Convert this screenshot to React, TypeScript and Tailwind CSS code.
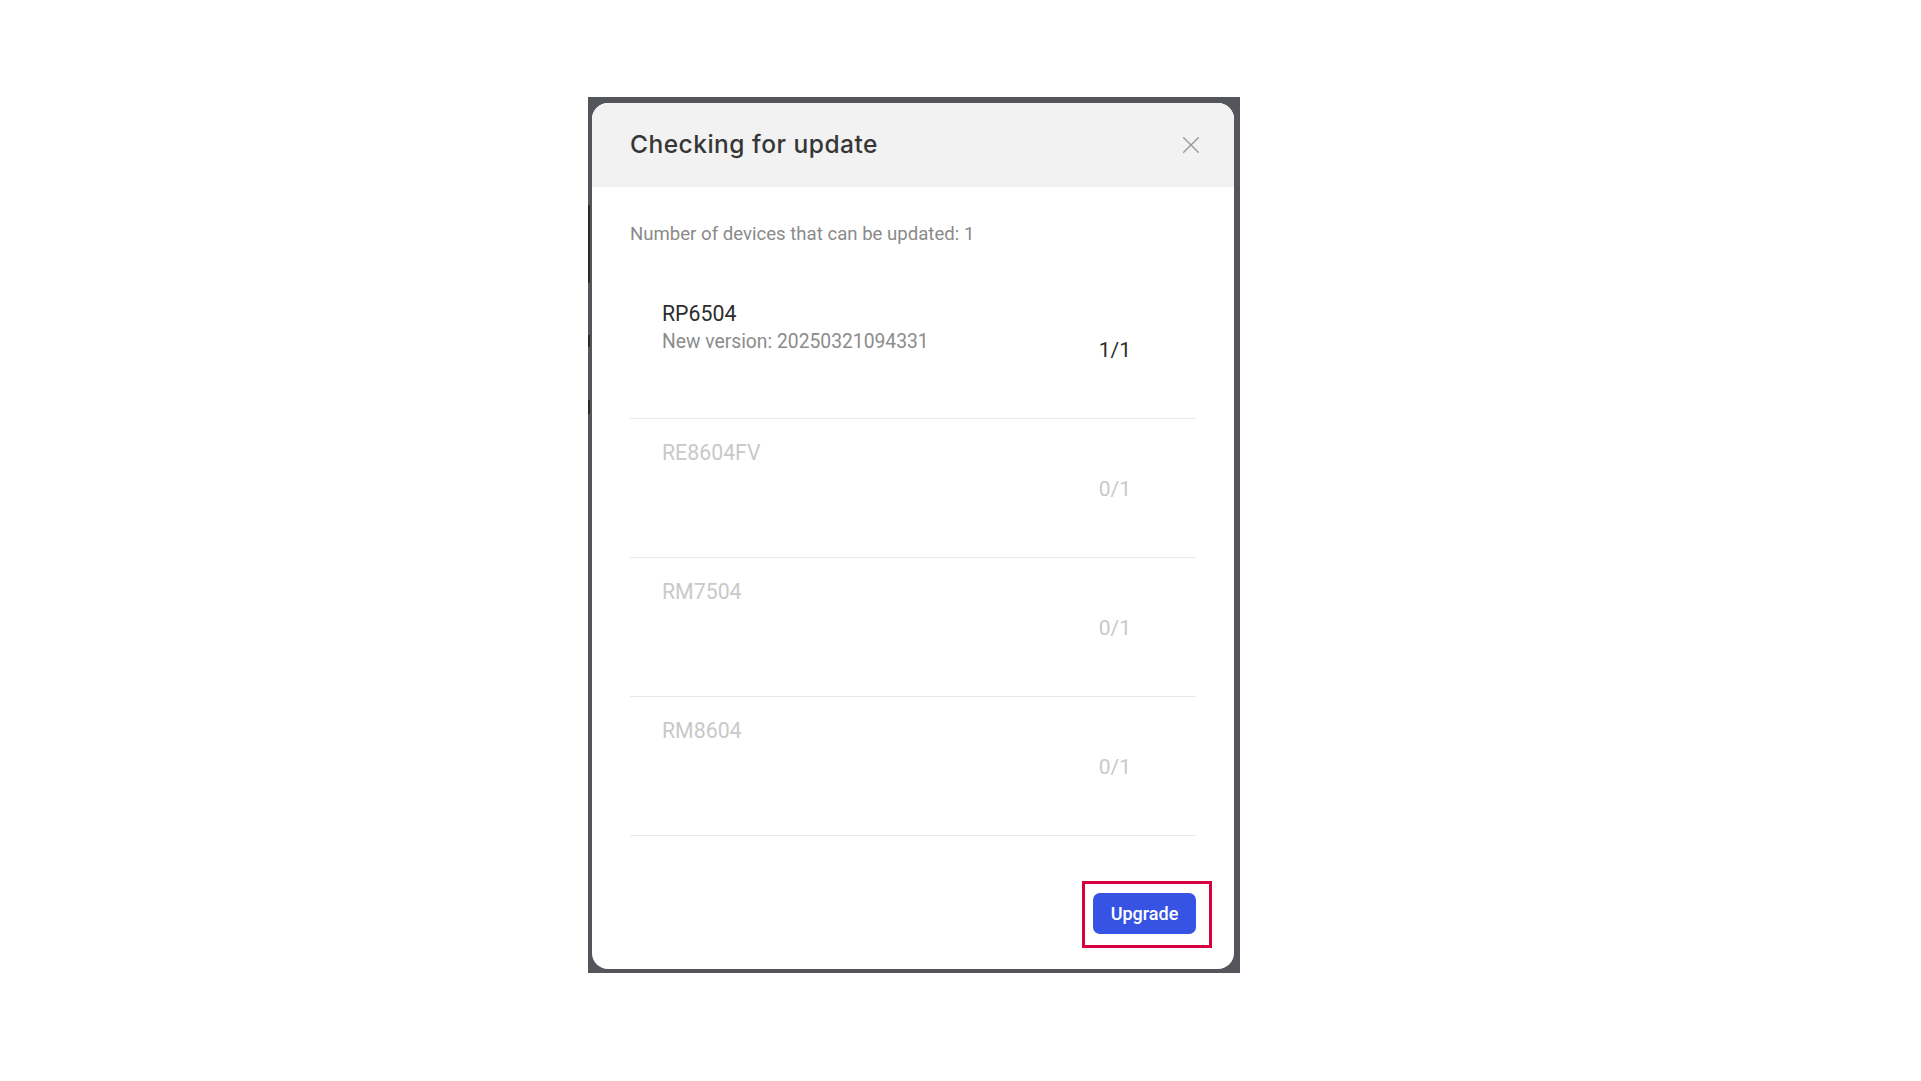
import React from "react";

const rows = [
  { name: "RP6504", version: "New version: 20250321094331", count: "1/1", active: true },
  { name: "RE8604FV", version: "", count: "0/1", active: false },
  { name: "RM7504", version: "", count: "0/1", active: false },
  { name: "RM8604", version: "", count: "0/1", active: false },
];

export default function App() {
  return (
    <div className="min-h-[1081px] w-full bg-white pl-[588px] pt-[97px]" style={{ fontFamily: "Roboto, 'Liberation Sans', sans-serif" }}>
      <div className="relative w-[652px] bg-[#55565b] pl-[4px] pr-[6px] pt-[6px] pb-[4px]">
        <div className="absolute left-0 top-[108px] h-[78px] w-[2px] bg-[#2a2a2c]" />
        <div className="absolute left-0 top-[238px] h-[12px] w-[2px] bg-[#2a2a2c]" />
        <div className="absolute left-0 top-[303px] h-[14px] w-[2px] bg-[#2a2a2c]" />
        <div className="overflow-hidden rounded-[16px] bg-white">
          <div className="flex h-[84px] items-center justify-between bg-[#f2f2f2] pl-[38px] pr-[35px]">
            <h1
              className="pb-[2px] text-[24.5px] font-medium text-[#363636] tracking-[0.5px]"
              style={{ fontFamily: "Inter, 'Open Sans', sans-serif" }}
            >
              Checking for update
            </h1>
            <button className="flex h-[16px] w-[16px] items-center justify-center">
              <svg width="16" height="16" viewBox="0 0 16 16" fill="none">
                <path d="M0.7 0.7 L15.3 15.3 M15.3 0.7 L0.7 15.3" stroke="#9a9a9a" strokeWidth="1.4" strokeLinecap="round" />
              </svg>
            </button>
          </div>
          <div className="px-[38px] pt-[34px]">
            <p className="text-[18.6px] leading-[26px] text-[#8a8a8a]">Number of devices that can be updated: 1</p>
            <div className="mt-[33px]">
              {rows.map((r) => (
                <div key={r.name} className="flex h-[139px] items-start justify-between border-b border-[#e8e8e8] pl-[32px] pr-[65px]">
                  <div className="pt-[20px]">
                    <div className={`text-[21.3px] leading-[28px] ${r.active ? "text-[#2d2d2d]" : "text-[#c9c9c9]"}`}>{r.name}</div>
                    {r.version && <div className="pt-[1px] text-[19.3px] leading-[25px] text-[#8c8c8c]">{r.version}</div>}
                  </div>
                  <div className={`self-center pt-[1px] text-[21px] leading-[28px] ${r.active ? "text-[#2d2d2d]" : "text-[#c9c9c9]"}`}>{r.count}</div>
                </div>
              ))}
            </div>
          </div>
          <div className="flex justify-end pr-[22px] pt-[45px] pb-[21px]">
            <div className="border-[3px] border-[#d8003f] pl-[8px] pr-[13px] pt-[9px] pb-[11px]">
              <button className="h-[41px] w-[103px] rounded-[7px] bg-[#3753e4] text-[18px] font-medium text-white">Upgrade</button>
            </div>
          </div>
        </div>
      </div>
    </div>
  );
}
